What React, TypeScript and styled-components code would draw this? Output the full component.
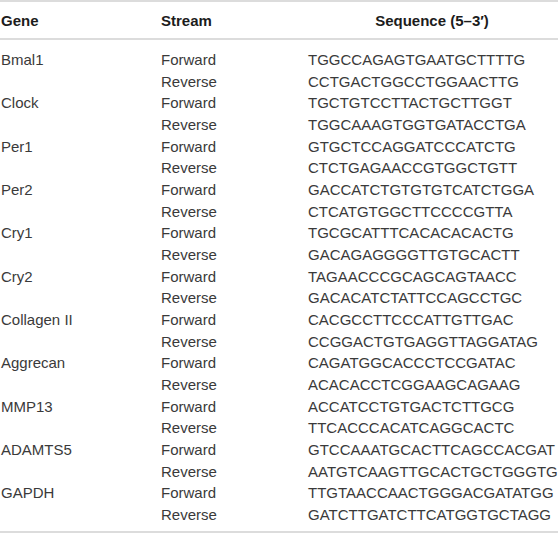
import React from "react";
import styled, { createGlobalStyle } from "styled-components";

const Global = createGlobalStyle`
  html, body { margin: 0; padding: 0; background: #ffffff; }
  body { font-family: "Liberation Sans", Arial, Helvetica, sans-serif; }
`;

const Table = styled.div`
  width: 558px;
  border-top: 2px solid #dcdcdc;
  border-bottom: 2px solid #dcdcdc;
  padding-bottom: 6px;
  box-sizing: border-box;
`;

const Row = styled.div<{ $header?: boolean }>`
  display: grid;
  grid-template-columns: 160px 147px 1fr;
  padding: 0 2px 0 1px;
  font-size: 15px;
  line-height: 21.65px;
  color: ${(p) => (p.$header ? "#1c1c1c" : "#3a3a3a")};
  font-weight: ${(p) => (p.$header ? 700 : 400)};
`;

const HeaderRow = styled(Row)`
  padding-top: 8px;
  padding-bottom: 6.4px;
  border-bottom: 2px solid #dcdcdc;
  margin-bottom: 9px;
`;

const Cell = styled.div<{ $center?: boolean }>`
  text-align: ${(p) => (p.$center ? "center" : "left")};
  white-space: nowrap;
`;

const Line = styled.div``;

const data: [string, string, string][] = [
  ["Bmal1", "TGGCCAGAGTGAATGCTTTTG", "CCTGACTGGCCTGGAACTTG"],
  ["Clock", "TGCTGTCCTTACTGCTTGGT", "TGGCAAAGTGGTGATACCTGA"],
  ["Per1", "GTGCTCCAGGATCCCATCTG", "CTCTGAGAACCGTGGCTGTT"],
  ["Per2", "GACCATCTGTGTGTCATCTGGA", "CTCATGTGGCTTCCCCGTTA"],
  ["Cry1", "TGCGCATTTCACACACACTG", "GACAGAGGGGTTGTGCACTT"],
  ["Cry2", "TAGAACCCGCAGCAGTAACC", "GACACATCTATTCCAGCCTGC"],
  ["Collagen II", "CACGCCTTCCCATTGTTGAC", "CCGGACTGTGAGGTTAGGATAG"],
  ["Aggrecan", "CAGATGGCACCCTCCGATAC", "ACACACCTCGGAAGCAGAAG"],
  ["MMP13", "ACCATCCTGTGACTCTTGCG", "TTCACCCACATCAGGCACTC"],
  ["ADAMTS5", "GTCCAAATGCACTTCAGCCACGAT", "AATGTCAAGTTGCACTGCTGGGTG"],
  ["GAPDH", "TTGTAACCAACTGGGACGATATGG", "GATCTTGATCTTCATGGTGCTAGG"],
];

export default function App() {
  return (
    <>
      <Global />
      <Table>
        <HeaderRow $header>
          <Cell>Gene</Cell>
          <Cell>Stream</Cell>
          <Cell $center>Sequence (5–3′)</Cell>
        </HeaderRow>
        {data.map(([gene, fwd, rev]) => (
          <Row key={gene}>
            <Cell>{gene}</Cell>
            <Cell>
              <Line>Forward</Line>
              <Line>Reverse</Line>
            </Cell>
            <Cell>
              <Line>{fwd}</Line>
              <Line>{rev}</Line>
            </Cell>
          </Row>
        ))}
      </Table>
    </>
  );
}
